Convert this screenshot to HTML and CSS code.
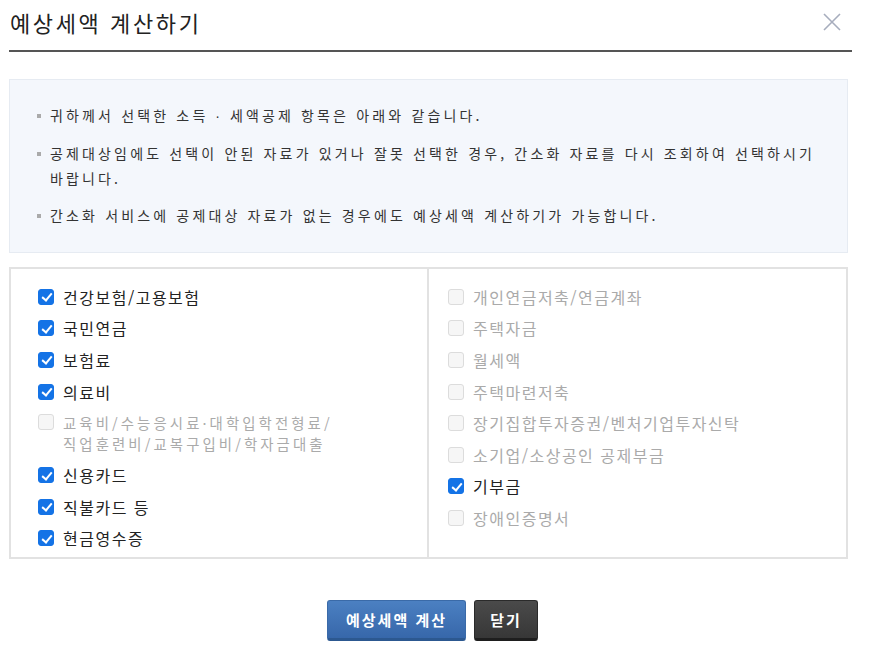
FILE: index.html
```html
<!DOCTYPE html>
<html lang="ko">
<head>
<meta charset="utf-8">
<link rel="stylesheet" href="styles.css">
</head>
<body>
<div class="modal">
  <div class="header">
    <h1 class="title">예상세액 계산하기</h1>
    <button class="close" aria-label="닫기">
      <svg width="20" height="20" viewBox="0 0 20 20"><path d="M2 2L18 18M18 2L2 18" stroke="#a7adbd" stroke-width="1.6" fill="none"/></svg>
    </button>
  </div>
  <div class="info">
    <p class="info-item">귀하께서 선택한 소득<span class="dot"> · </span>세액공제 항목은 아래와 같습니다.</p>
    <p class="info-item">공제대상임에도 선택이 안된 자료가 있거나 잘못 선택한 경우, 간소화 자료를 다시 조회하여 선택하시기<br>바랍니다.</p>
    <p class="info-item">간소화 서비스에 공제대상 자료가 없는 경우에도 예상세액 계산하기가 가능합니다.</p>
  </div>
  <div class="grid">
    <ul class="col col-left">
      <li class="opt"><span class="box on"></span><span>건강보험/고용보험</span></li>
      <li class="opt"><span class="box on"></span><span>국민연금</span></li>
      <li class="opt"><span class="box on"></span><span>보험료</span></li>
      <li class="opt"><span class="box on"></span><span>의료비</span></li>
      <li class="opt off two"><span class="box"></span><span class="lines"><span class="line">교육비/수능응시료·대학입학전형료/</span><span class="line">직업훈련비/교복구입비/학자금대출</span></span></li>
      <li class="opt"><span class="box on"></span><span>신용카드</span></li>
      <li class="opt"><span class="box on"></span><span>직불카드 등</span></li>
      <li class="opt"><span class="box on"></span><span>현금영수증</span></li>
    </ul>
    <ul class="col col-right">
      <li class="opt off"><span class="box"></span><span>개인연금저축/연금계좌</span></li>
      <li class="opt off"><span class="box"></span><span>주택자금</span></li>
      <li class="opt off"><span class="box"></span><span>월세액</span></li>
      <li class="opt off"><span class="box"></span><span>주택마련저축</span></li>
      <li class="opt off"><span class="box"></span><span>장기집합투자증권/벤처기업투자신탁</span></li>
      <li class="opt off"><span class="box"></span><span>소기업/소상공인 공제부금</span></li>
      <li class="opt"><span class="box on"></span><span>기부금</span></li>
      <li class="opt off"><span class="box"></span><span>장애인증명서</span></li>
    </ul>
  </div>
  <div class="actions">
    <button class="btn btn-primary">예상세액 계산</button>
    <button class="btn btn-dark">닫기</button>
  </div>
</div>
</body>
</html>
```
FILE: styles.css
```css
* { box-sizing: border-box; }
html, body { margin: 0; padding: 0; background: #fff; }
body {
  font-family: "Noto Sans CJK KR", "Noto Sans", sans-serif;
  color: #222;
  width: 870px;
  height: 665px;
  overflow: hidden;
}
.modal {
  padding: 0 18px 0 9px;
}
.header {
  display: flex;
  align-items: center;
  justify-content: space-between;
  height: 52px;
  border-bottom: 2px solid #555;
  padding-bottom: 6px;
}
.title {
  margin: 0 0 0 1px;
  font-size: 22px;
  font-weight: 400;
  color: #222;
  letter-spacing: 2.6px;
  line-height: 30px;
}
.close {
  border: 0;
  background: transparent;
  padding: 0;
  margin-right: 10px;
  width: 20px;
  height: 20px;
  display: flex;
}
.info {
  margin-top: 27px;
  width: 839px;
  height: 174px;
  background: #f4f7fc;
  border: 1px solid #e6ebf2;
  padding: 23px 10px 0 27px;
}
.info-item {
  margin: 0 0 12px;
  font-size: 14px;
  line-height: 25px;
  letter-spacing: 3.15px;
  color: #333;
  position: relative;
  padding-left: 13px;
  white-space: nowrap;
}
.info-item .dot {
  font-family: "Liberation Sans", sans-serif;
  letter-spacing: 3px;
}
.info-item::before {
  content: "";
  position: absolute;
  left: 0;
  top: 11px;
  width: 4px;
  height: 4px;
  background: #aaa;
}
.grid {
  margin-top: 14px;
  width: 839px;
  height: 292px;
  border: 2px solid #e2e2e2;
  display: grid;
  grid-template-columns: 418px 1fr;
}
.col {
  list-style: none;
  margin: 0;
  padding: 12px 0 0;
}
.col-left {
  padding-left: 27px;
  border-right: 2px solid #e2e2e2;
}
.col-right {
  padding-left: 19px;
}
.opt {
  display: flex;
  align-items: center;
  gap: 9px;
  font-size: 16px;
  line-height: 20px;
  letter-spacing: 1.5px;
  height: 31.6px;
  color: #222;
}
.opt.two {
  align-items: flex-start;
  height: 52px;
  padding-top: 5px;
}
.opt.two .box { margin-top: 2px; }
.lines {
  display: flex;
  flex-direction: column;
  font-size: 14.4px;
  letter-spacing: 3.1px;
}
.line {
  display: block;
  height: 21px;
  line-height: 21px;
}
.opt.off { color: #aaa; }
.box {
  flex: none;
  width: 16px;
  height: 16px;
  border-radius: 3px;
  border: 1px solid #dcdcdc;
  background: #f6f6f6;
  position: relative;
}
.box.on {
  background: #1473e6;
  border-color: #1473e6;
}
.box.on::after {
  content: "";
  position: absolute;
  left: 4.5px;
  top: 1.5px;
  width: 4px;
  height: 8px;
  border-right: 2.2px solid #fff;
  border-bottom: 2.2px solid #fff;
  transform: rotate(40deg);
}
.actions {
  display: flex;
  justify-content: center;
  gap: 8px;
  margin-top: 41px;
  padding-left: 4px;
}
.btn {
  height: 41px;
  border-radius: 3px;
  font-family: "Noto Sans CJK KR", sans-serif;
  font-size: 15px;
  font-weight: 700;
  color: #fff;
  letter-spacing: 2px;
  cursor: pointer;
}
.btn-primary {
  width: 139px;
  background: linear-gradient(#4b80c2, #3767aa);
  border: 1px solid #3a6aa8;
  border-bottom: 3px solid #2c5890;
}
.btn-dark {
  width: 64px;
  background: linear-gradient(#4a4a4a, #373737);
  border: 1px solid #2a2a2a;
  border-bottom: 3px solid #1e1e1e;
}
```
